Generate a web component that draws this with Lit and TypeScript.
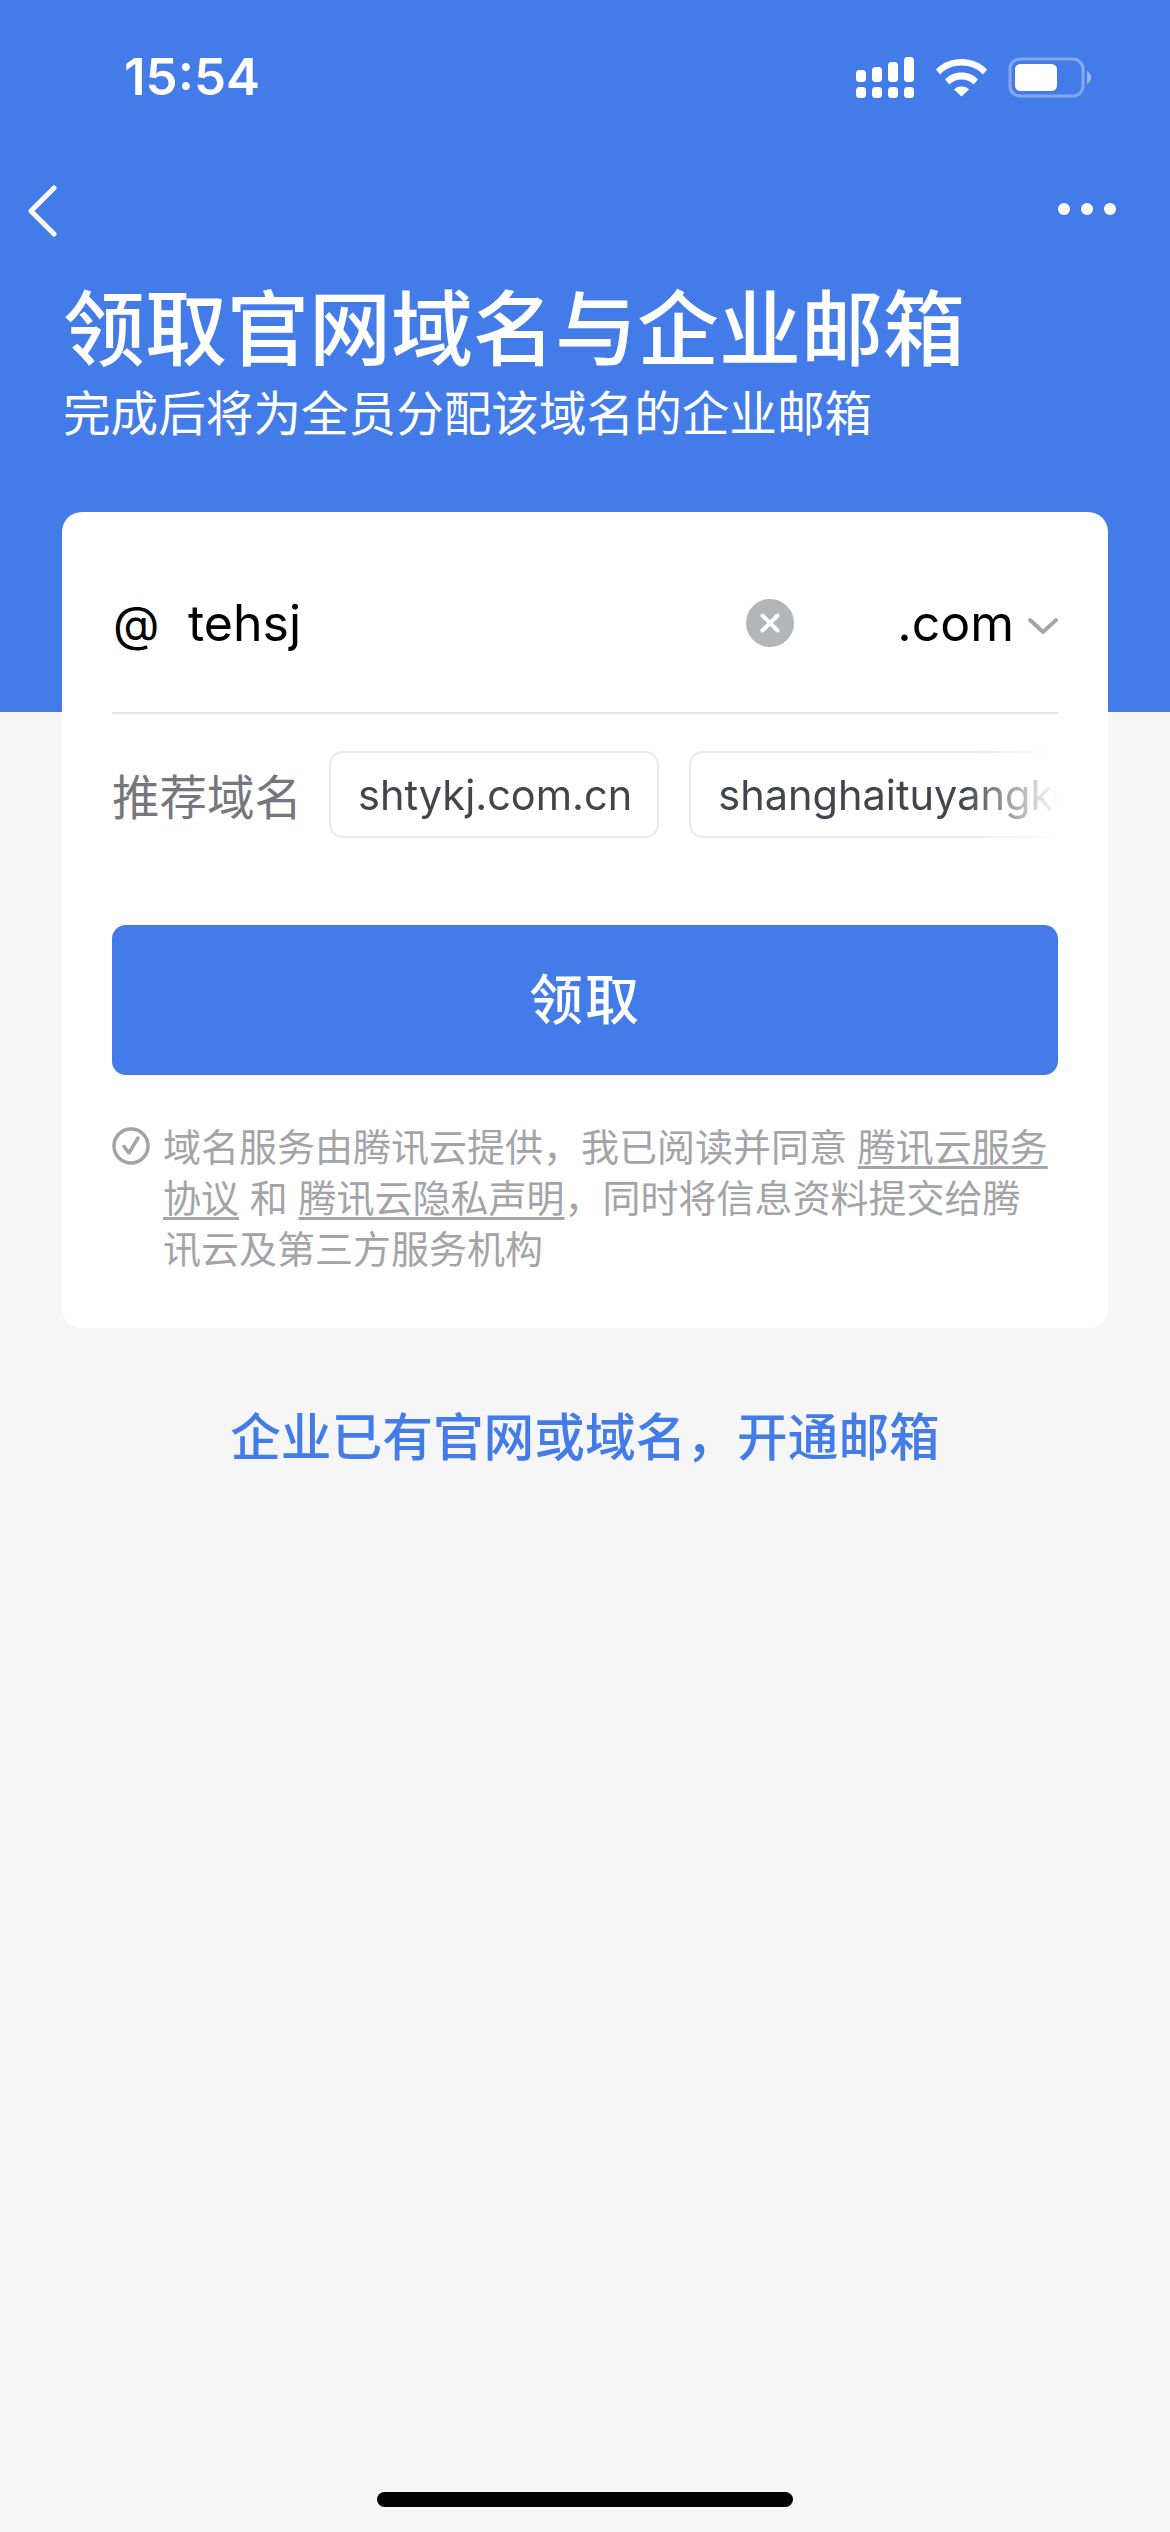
import { LitElement, html, css } from "lit";
import { customElement } from "lit/decorators.js";

@customElement("app-root")
export class AppRoot extends LitElement {
  static styles = css`
    :host {
      display: block;
      width: 1170px;
      height: 2532px;
      overflow: hidden;
      font-family: Inter, "Noto Sans CJK SC", sans-serif;
      background: linear-gradient(#437ce8 712px, #f6f6f7 712px);
    }
    .page { height: 2532px; display: flex; flex-direction: column; }
    .status {
      height: 156px;
      padding: 0 78px 0 124px;
      display: flex;
      justify-content: space-between;
      align-items: flex-start;
      box-sizing: border-box;
    }
    .time {
      margin-top: 47px;
      font-size: 51px;
      line-height: 60px;
      font-weight: 600;
      color: #fff;
    }
    .status svg { margin-top: 57px; display: block; }
    .nav {
      height: 118px;
      display: flex;
      justify-content: space-between;
      align-items: flex-start;
      padding: 29px 54px 0 26px;
      box-sizing: border-box;
    }
    .nav svg { display: block; }
    .nav .more { margin-top: 18px; }
    .head { padding: 0 63px; color: #fff; }
    h1 {
      margin: 0;
      font-size: 82px;
      line-height: 112px;
      font-weight: 500;
      white-space: nowrap;
      letter-spacing: 0;
    }
    .sub {
      margin-top: -4px;
      font-size: 47.6px;
      line-height: 64px;
      font-weight: 400;
      white-space: nowrap;
    }
    .card {
      margin: 66px 62px 0;
      background: #fff;
      border-radius: 20px;
      padding: 0 50px;
      height: 816px;
      box-sizing: border-box;
    }
    .input {
      height: 202px;
      box-sizing: border-box;
      padding-top: 22px;
      display: flex;
      align-items: center;
      border-bottom: 2px solid #e6e6e8;
      font-size: 50px;
      color: #000;
    }
    .at { width: 75px; flex: none; margin-left: 1px; font-size: 48px; }
    .val { flex: 1; }
    .clear { display: block; margin-right: 103px; }
    .tld { white-space: nowrap; }
    .caret { display: block; margin-left: 14px; margin-top: 6px; }
    .rec {
      margin-top: 37px;
      height: 87px;
      display: flex;
      align-items: center;
    }
    .rec-label {
      flex: none;
      width: 217px;
      font-size: 47.5px;
      color: #76767c;
      white-space: nowrap;
    }
    .tags {
      flex: 1;
      min-width: 0;
      display: flex;
      gap: 30px;
      overflow: hidden;
      -webkit-mask-image: linear-gradient(90deg, #000 87%, transparent 100%);
      mask-image: linear-gradient(90deg, #000 87%, transparent 100%);
    }
    .tag {
      flex: none;
      height: 87px;
      box-sizing: border-box;
      padding: 0 25px 0 27px;
      display: flex;
      align-items: center;
      border: 2px solid #e9e9eb;
      border-radius: 14px;
      font-size: 41.5px;
      color: #44454c;
      white-space: nowrap;
    }
    .btn {
      margin-top: 87px;
      height: 150px;
      padding-bottom: 8px;
      box-sizing: border-box;
      border-radius: 14px;
      background: #437ce8;
      color: #fff;
      font-size: 54px;
      font-weight: 500;
      display: flex;
      align-items: center;
      justify-content: center;
      letter-spacing: 2px;
    }
    .legal {
      margin-top: 47px;
      display: flex;
      gap: 13px;
      font-size: 38px;
      line-height: 51px;
      color: #a3a4a8;
    }
    .legal svg { flex: none; display: block; margin-top: 5px; }
    .legal u { text-underline-offset: 5px; text-decoration-thickness: 3px; }
    .alt {
      margin-top: 73px;
      text-align: center;
      font-size: 50.7px;
      line-height: 74px;
      font-weight: 500;
      color: #437ce8;
    }
    .spacer { flex: 1; }
    .home {
      align-self: center;
      width: 416px;
      height: 15px;
      border-radius: 8px;
      background: #000;
      margin-bottom: 25px;
    }
  `;

  render() {
    return html`<div class="page">
      <div class="status">
        <div class="time">15:54</div>
        <svg width="236" height="42" viewBox="856 57 236 42" fill="#fff">
          <rect x="856" y="70" width="10" height="12" rx="3.5"/>
          <rect x="872" y="67" width="10" height="15" rx="3.5"/>
          <rect x="888" y="62" width="10" height="20" rx="3.5"/>
          <rect x="904" y="57" width="10" height="25" rx="3.5"/>
          <rect x="856" y="87" width="10" height="11" rx="3.5"/>
          <rect x="872" y="87" width="10" height="11" rx="3.5"/>
          <rect x="888" y="87" width="10" height="11" rx="3.5"/>
          <rect x="904" y="87" width="10" height="11" rx="3.5"/>
          <path d="M936 69.5C942.5 62.5 951.5 59 961.5 59S980.5 62.5 987 69.5L983 74.5C977.5 68.5 970 65.5 961.5 65.5S945.5 68.5 940 74.5Z"/>
          <path d="M945 79.5C949 75 955 72.5 961.5 72.5S974 75 978 79.5L973.5 84.5C971 81.5 966.5 79.5 961.5 79.5S952 81.5 949.5 84.5Z"/>
          <path d="M954 89.5C955.5 87.5 958.5 86.5 961.5 86.5S967.5 87.5 969 89.5L961.5 96.5Z"/>
          <rect x="1010" y="59" width="73" height="37" rx="10" fill="none" stroke="#fff" stroke-opacity=".35" stroke-width="3"/>
          <rect x="1015" y="64" width="42" height="27" rx="5.5"/>
          <path d="M1087 71C1090 72.5 1091 75 1091 77.5S1090 82.5 1087 84Z" fill-opacity=".45"/>
        </svg>
      </div>
      <div class="nav">
        <svg width="32" height="52" viewBox="0 0 32 52" fill="none" stroke="#fff" stroke-width="5" stroke-linecap="round" stroke-linejoin="round">
          <path d="M28 3 5 26 28 49"/>
        </svg>
        <svg class="more" width="58" height="12" viewBox="0 0 58 12" fill="#fff">
          <circle cx="6" cy="6" r="6"/><circle cx="29" cy="6" r="6"/><circle cx="52" cy="6" r="6"/>
        </svg>
      </div>
      <div class="head">
        <h1>领取官网域名与企业邮箱</h1>
        <div class="sub">完成后将为全员分配该域名的企业邮箱</div>
      </div>
      <div class="card">
        <div class="input">
          <span class="at">@</span>
          <span class="val">tehsj</span>
          <svg class="clear" width="48" height="48" viewBox="0 0 48 48">
            <circle cx="24" cy="24" r="24" fill="#b4b5b9"/>
            <path d="M16.5 16.5 31.5 31.5M31.5 16.5 16.5 31.5" stroke="#fff" stroke-width="4" stroke-linecap="round"/>
          </svg>
          <span class="tld">.com</span>
          <svg class="caret" width="30" height="18" viewBox="0 0 30 18" fill="none" stroke="#a5a6aa" stroke-width="4" stroke-linecap="round" stroke-linejoin="round">
            <path d="M2 3 15 15 28 3"/>
          </svg>
        </div>
        <div class="rec">
          <div class="rec-label">推荐域名</div>
          <div class="tags">
            <div class="tag">shtykj.com.cn</div>
            <div class="tag">shanghaituyangkeji.com</div>
          </div>
        </div>
        <div class="btn">领取</div>
        <div class="legal">
          <svg width="38" height="38" viewBox="0 0 38 38" fill="none" stroke="#a3a4a8" stroke-width="3.5" stroke-linecap="round" stroke-linejoin="round">
            <circle cx="19" cy="19" r="17"/>
            <path d="M12 19.5 17 26 26 11"/>
          </svg>
          <div>域名服务由腾讯云提供，我已阅读并同意 <u>腾讯云服务协议</u> 和 <u>腾讯云隐私声明</u>，同时将信息资料提交给腾讯云及第三方服务机构</div>
        </div>
      </div>
      <div class="alt">企业已有官网或域名，开通邮箱</div>
      <div class="spacer"></div>
      <div class="home"></div>
    </div>`;
  }
}
